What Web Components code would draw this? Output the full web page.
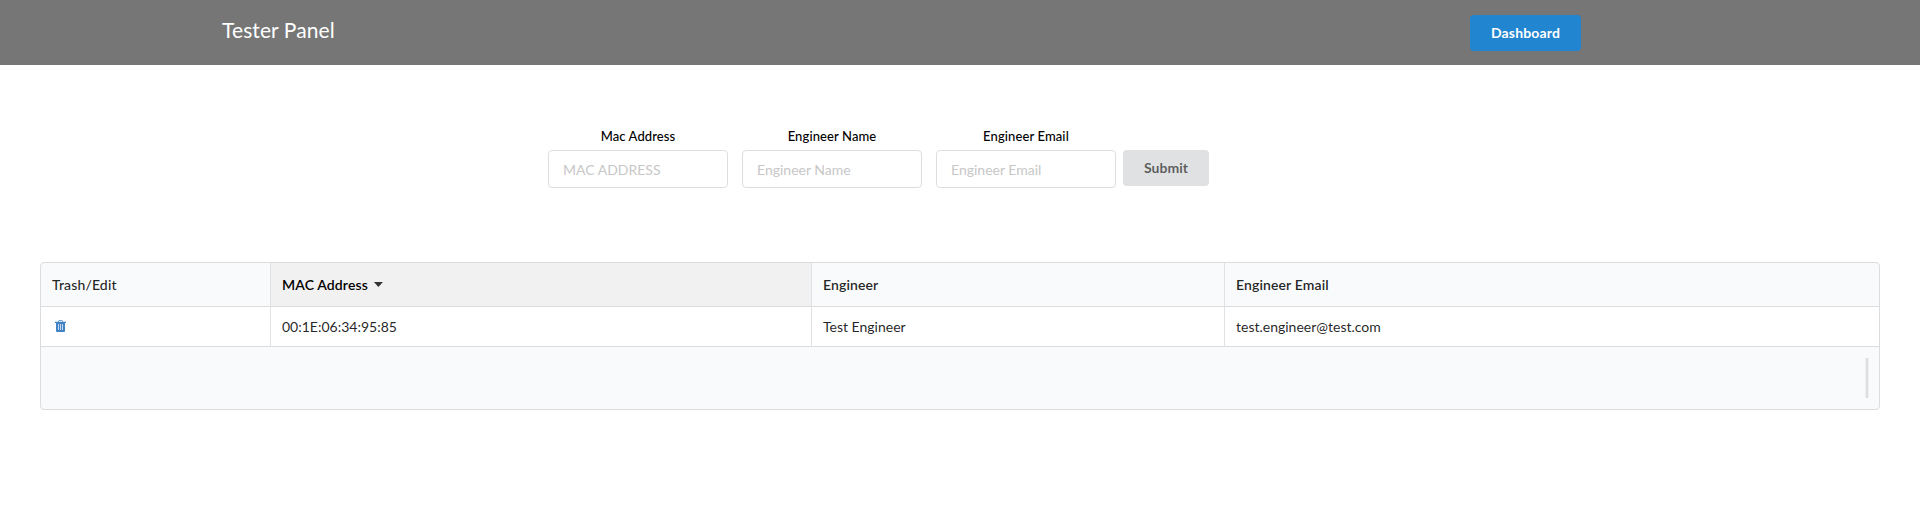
<!DOCTYPE html>
<html lang="en"><head><meta charset="utf-8"><title>Tester Panel</title>
<style>
body{margin:0;background:#fff;font-family:Lato,"Liberation Sans",sans-serif;font-size:14px;line-height:18px;color:rgba(0,0,0,.87)}
</style></head><body>
<tester-page></tester-page>
<script>
const define=(name,html)=>{
  const t=document.createElement('template');t.innerHTML=html;
  customElements.define(name,class extends HTMLElement{
    constructor(){super();this.attachShadow({mode:'open'}).append(t.content.cloneNode(true));}
    connectedCallback(){
      const i=this.shadowRoot.querySelector('input');
      if(i)i.placeholder=this.getAttribute('placeholder')||'';
    }
  });
};
define('ui-button',`<style>
:host{display:block}
button{display:block;width:100%;height:36px;margin:0;padding:0;border:0;border-radius:4px;background:var(--bg,#e0e1e2);color:var(--fg,rgba(0,0,0,.6));font:700 14px/14px Lato,sans-serif;letter-spacing:var(--track,0)}
</style><button><slot></slot></button>`);
define('top-bar',`<style>
:host{display:flex;justify-content:space-between;align-items:flex-start;box-sizing:border-box;height:65px;padding:15px 339px 0 222px;background:#767676;color:#fff}
.title{font-size:21px;line-height:30px;letter-spacing:.1px}
ui-button{width:111px;--bg:#2185d0;--fg:#fff;--track:.15px}
</style><div class="title"><slot></slot></div><ui-button>Dashboard</ui-button>`);
define('form-field',`<style>
:host{display:block;width:180px}
label{display:block;text-align:center;font-size:13px;line-height:18px;font-weight:500;letter-spacing:.11px;color:#000;margin-bottom:5px}
input{display:block;box-sizing:border-box;width:180px;height:38px;margin:0;padding:1px 14px 0;border:1px solid #dededf;border-radius:4px;background:#fff;font:14px/17px Lato,sans-serif;outline:0}
input::placeholder{color:#c7c7c7;opacity:1}
</style><label><slot></slot></label><input>`);
define('tester-form',`<style>
:host{display:flex;gap:14px;padding:62px 0 0 548px}
ui-button{width:86px;margin:23px 0 0 -7px}
</style>
<form-field placeholder="MAC ADDRESS">Mac Address</form-field>
<form-field placeholder="Engineer Name">Engineer Name</form-field>
<form-field placeholder="Engineer Email">Engineer Email</form-field>
<ui-button>Submit</ui-button>`);
define('trash-icon',`<style>:host{display:block;width:11px;height:12px}svg{display:block}</style>
<svg width="11" height="12" viewBox="0 0 11 12"><path d="M3.5 2V1.2Q3.5.5 4.2.5h2.6q.7 0 .7.7V2" fill="none" stroke="#6a9dd0"/><path d="M0 1.7h11V3H0z" fill="#4183c4"/><path d="M1 3h9v8q0 1-1 1H2q-1 0-1-1z" fill="#4183c4"/><path d="M3.5 4v6M5.5 4v6M7.5 4v6" stroke="#c3d8ed"/></svg>`);
define('tester-table',`<style>
:host{display:block;box-sizing:border-box;width:1840px;height:148px;margin:74px 0 0 40px;border:1px solid #dbdcdd;border-radius:4px;background:#f9fafb;overflow:hidden}
.row{display:grid;grid-template-columns:229px 541px 413px 1fr}
.row>div{display:flex;align-items:center;box-sizing:border-box;padding-left:11px;border-bottom:1px solid #dbdcdd}
.row>div+div{border-left:1px solid #e0e1e2}
.head{height:44px;font-weight:600;letter-spacing:.12px}
.head>div:nth-child(1){font-weight:500;letter-spacing:.14px}
.head>.sorted{background:#f1f1f1;color:#000}
.body{height:40px;background:#fff}
.arrow{width:9px;height:5px;margin-left:6px;background:#333;clip-path:polygon(0 0,100% 0,50% 100%)}
.foot{display:flex;justify-content:flex-end;padding:11px 10px 0 0}
.thumb{box-sizing:border-box;width:4px;height:40px;background:#dcddde;border:solid #f0f1f2;border-width:0 1px}
trash-icon{margin:0 0 1px 3px}
</style>
<div class="row head"><div>Trash/Edit</div><div class="sorted">MAC Address<span class="arrow"></span></div><div>Engineer</div><div>Engineer Email</div></div>
<div class="row body"><div><trash-icon></trash-icon></div><div>00:1E:06:34:95:85</div><div>Test Engineer</div><div>test.engineer@test.com</div></div>
<div class="foot"><div class="thumb"></div></div>`);
define('tester-page',`<style>:host{display:block;height:510px;overflow:hidden}</style>
<top-bar>Tester Panel</top-bar><tester-form></tester-form><tester-table></tester-table>`);
</script></body></html>
